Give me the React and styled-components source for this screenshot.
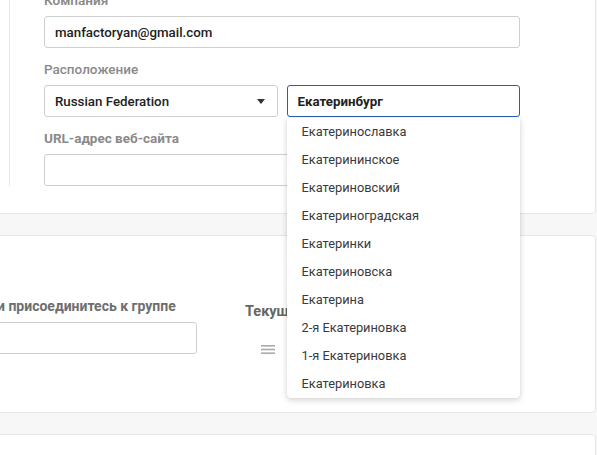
import React from 'react';
import styled, { createGlobalStyle } from 'styled-components';

const GlobalStyle = createGlobalStyle`
  html, body {
    margin: 0;
    padding: 0;
    background: #f7f7f7;
    font-family: Roboto, 'Liberation Sans', Arial, sans-serif;
    overflow: hidden;
  }
`;

const cities = [
  'Екатеринославка',
  'Екатерининское',
  'Екатериновский',
  'Екатериноградская',
  'Екатеринки',
  'Екатериновска',
  'Екатерина',
  '2-я Екатериновка',
  '1-я Екатериновка',
  'Екатериновка',
];

const Page = styled.div`
  display: flex;
  flex-direction: column;
  gap: 21px;
  margin: -29px 1px 0 -20px;
`;

const Card = styled.section`
  background: #fff;
  border: 1px solid #e6e6e6;
  border-radius: 0 4px 4px 0;
  padding: ${(p) => p.$pad || '0'};
  min-height: ${(p) => p.$minHeight || 'auto'};
  display: flex;
  position: relative;
`;

const SideCol = styled.div`
  width: 28px;
  border-right: 1px solid #e6e6e6;
  margin-right: 34px;
`;

const Form = styled.div`
  width: 476px;
  display: flex;
  flex-direction: column;
  gap: 13px;
`;

const Field = styled.div`
  display: flex;
  flex-direction: column;
  gap: 8px;
`;

const Label = styled.label`
  font-size: ${(p) => p.$size || '13.5px'};
  line-height: 16px;
  font-weight: ${(p) => p.$weight || 500};
  color: ${(p) => p.$color || '#8a8a8a'};
  white-space: nowrap;
`;

const Input = styled.div`
  box-sizing: border-box;
  height: 32px;
  border: 1px solid ${(p) => (p.$focus ? '#2c5db6' : '#cfcfcf')};
  border-radius: 3px;
  padding: 0 10px;
  display: flex;
  align-items: center;
  justify-content: space-between;
  font-size: 13.3px;
  font-weight: ${(p) => p.$weight || 400};
  color: #222;
  background: #fff;
`;

const Row = styled.div`
  display: flex;
  gap: 9px;
`;

const Half = styled.div`
  flex: 1;
  position: relative;
`;

const Caret = styled.span`
  width: 0;
  height: 0;
  border-left: 4px solid transparent;
  border-right: 4px solid transparent;
  border-top: 5px solid #333;
  margin-right: 2px;
`;

const Menu = styled.ul`
  position: absolute;
  top: 33px;
  left: 0;
  right: 0;
  margin: 0;
  padding: 0;
  list-style: none;
  background: #fff;
  border-radius: 0 0 4px 4px;
  box-shadow: 0 2px 6px rgba(0, 0, 0, 0.18), 0 0 1px rgba(0, 0, 0, 0.15);
  z-index: 10;
`;

const MenuItem = styled.li`
  height: 28px;
  line-height: 28px;
  padding-left: 15px;
  font-size: 12.8px;
  color: #3a3a3a;
`;

const Column = styled.div`
  display: flex;
  flex-direction: column;
  width: 120px;
`;

const SubTitle = styled.div`
  font-size: 14.5px;
  line-height: 18px;
  font-weight: 700;
  color: #666;
  margin-top: 5px;
  white-space: nowrap;
`;

const Handle = styled.svg`
  margin: 24px 0 0 16px;
`;

const GroupCol = styled.div`
  display: flex;
  flex-direction: column;
  gap: 8px;
  width: 200px;
  margin-right: 48px;
`;

export default function App() {
  return (
    <>
      <GlobalStyle />
      <Page>
        <Card $pad="20px 0 27px 0">
          <SideCol />
          <Form>
            <Field>
              <Label $weight={600}>Компания</Label>
              <Input $weight={500}>manfactoryan@gmail.com</Input>
            </Field>
            <Field>
              <Label>Расположение</Label>
              <Row>
                <Half>
                  <Input $weight={500}>
                    Russian Federation
                    <Caret />
                  </Input>
                </Half>
                <Half>
                  <Input $focus $weight={700}>
                    Екатеринбург
                  </Input>
                  <Menu>
                    {cities.map((c) => (
                      <MenuItem key={c}>{c}</MenuItem>
                    ))}
                  </Menu>
                </Half>
              </Row>
            </Field>
            <Field>
              <Label $weight={700}>URL-адрес веб-сайта</Label>
              <Input />
            </Field>
          </Form>
        </Card>
        <Card $pad="62px 0 58px 16px">
          <GroupCol>
            <Label $weight={700} $size="14px" $color="#6e6e6e">
              и присоединитесь к группе
            </Label>
            <Input />
          </GroupCol>
          <Column>
            <SubTitle>Текущие группы</SubTitle>
            <Handle width="14" height="9" viewBox="0 0 14 9">
              <rect x="0" y="0" width="14" height="1.6" fill="#aaa" />
              <rect x="0" y="3.7" width="14" height="1.6" fill="#aaa" />
              <rect x="0" y="7.4" width="14" height="1.6" fill="#aaa" />
            </Handle>
          </Column>
        </Card>
        <Card $minHeight="60px" />
      </Page>
    </>
  );
}
